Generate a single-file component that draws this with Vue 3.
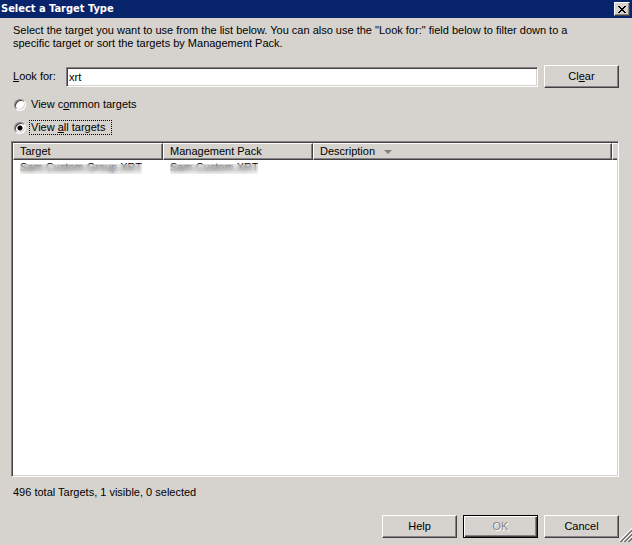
<template>
  <form class="dialog" @submit.prevent>
    <header class="title-bar">
      <h1>Select a Target Type</h1>
      <button type="button" class="close" aria-label="Close">
        <svg width="8" height="7" viewBox="0 0 8 7" shape-rendering="crispEdges">
          <path
            d="M0 0h2v1h1v1h2v-1h1v-1h2v1h-1v1h-1v1h-1v1h1v1h1v1h1v1h-2v-1h-1v-1h-2v1h-1v1h-2v-1h1v-1h1v-1h1v-1h-1v-1h-1v-1h-1z"
          />
        </svg>
      </button>
    </header>

    <main class="content">
      <p class="intro">
        Select the target you want to use from the list below. You can also use the "Look for:" field
        below to filter down to a specific target or sort the targets by Management Pack.
      </p>

      <!-- search -->
      <div class="search">
        <label for="look-for"><u>L</u>ook for:</label>
        <input id="look-for" v-model="query" type="text" />
        <button type="button" class="btn" @click="query = ''"><span>Cl<u>e</u>ar</span></button>
      </div>

      <!-- view mode -->
      <div class="modes">
        <label class="mode">
          <input v-model="mode" type="radio" name="mode" value="common" />
          <span class="caption" :class="{ focused: mode === 'common' }">View c<u>o</u>mmon targets</span>
        </label>
        <label class="mode">
          <input v-model="mode" type="radio" name="mode" value="all" />
          <span class="caption" :class="{ focused: mode === 'all' }">View <u>a</u>ll targets</span>
        </label>
      </div>

      <div class="list">
        <table>
          <colgroup>
            <col class="col-name" />
            <col class="col-name" />
            <col />
            <col class="col-rest" />
          </colgroup>
          <thead>
            <tr>
              <th v-for="col in columns" :key="col.label" scope="col">
                {{ col.label }}
                <svg v-if="col.sorted" class="sort" width="8" height="4" viewBox="0 0 8 4">
                  <path d="M0 0h8l-4 4z" fill="#808080" />
                </svg>
              </th>
              <td class="filler"></td>
            </tr>
          </thead>
          <tbody>
            <tr v-for="row in rows" :key="row.target">
              <td><span class="masked">{{ row.target }}</span></td>
              <td><span class="masked">{{ row.pack }}</span></td>
              <td></td>
              <td></td>
            </tr>
          </tbody>
        </table>
      </div>

      <p class="status">496 total Targets, {{ rows.length }} visible, 0 selected</p>
    </main>

    <footer class="actions">
      <button type="button" class="btn">Help</button>
      <button type="submit" class="btn default" disabled>OK</button>
      <button type="button" class="btn">Cancel</button>
    </footer>

    <svg class="grip" width="13" height="14" viewBox="0 0 13 14">
      <path d="M0 13L13 0M4 13L13 4M8 13L13 8" stroke="#fff" />
      <path d="M1 14L14 1M2 14L14 2M5 14L14 5M6 14L14 6M9 14L14 9M10 14L14 10" stroke="#77757a" />
    </svg>
  </form>
</template>

<script setup>
import { ref } from 'vue'

const query = ref('xrt')
const mode = ref('all')

const columns = [
  { label: 'Target' },
  { label: 'Management Pack' },
  { label: 'Description', sorted: true }
]

const rows = [{ target: 'Sam.Custom.Group.XRT', pack: 'Sam.Custom.XRT' }]
</script>

<style>
body {
  margin: 0;
}
</style>

<style scoped>
.dialog {
  position: relative;
  display: flex;
  flex-direction: column;
  box-sizing: border-box;
  min-height: 100vh;
  padding-bottom: 7px;
  background: #d6d3ce;
  color: #000;
  font: 11px/13px "Liberation Sans", Arial, sans-serif;
}

.dialog * {
  box-sizing: border-box;
}

.title-bar {
  display: flex;
  align-items: center;
  justify-content: space-between;
  height: 18px;
  padding: 0 2px 0 1px;
  background: #08246b;
}

.title-bar h1 {
  margin: 0;
  color: #fff;
  font: bold 11px/16px "DejaVu Sans Condensed", Tahoma, sans-serif;
}

button {
  margin: 0;
  padding: 0;
  border: 1px solid;
  border-color: #fff #424142 #424142 #fff;
  background: #d6d3ce;
  box-shadow: inset -1px -1px #848284;
  color: #000;
  font: inherit;
}

.close {
  display: flex;
  align-items: center;
  justify-content: center;
  width: 16px;
  height: 14px;
}

.content {
  display: flex;
  flex: 1;
  flex-direction: column;
  padding: 6px 13px 0 11px;
}

.intro {
  margin: 0;
  padding: 0 32px 0 2px;
}

.search {
  display: flex;
  align-items: center;
  margin-top: 15px;
}

.search label {
  width: 55px;
  padding-left: 2px;
}

.search input {
  flex: 1;
  min-width: 0;
  height: 20px;
  margin-right: 6px;
  padding: 0 2px;
  border: 1px solid;
  border-color: #848284 #fff #fff #848284;
  outline: 0;
  background: #fff;
  box-shadow: inset 1px 1px #424142, inset -1px -1px #d6d3ce;
  font: inherit;
}

.btn {
  width: 75px;
  height: 23px;
}

.btn.default {
  border-color: #000;
  box-shadow: inset 1px 1px #fff, inset -1px -1px #424142, inset -2px -2px #848284;
}

.btn:disabled {
  color: #848284;
  text-shadow: 1px 1px #fff;
}

.modes {
  display: flex;
  flex-direction: column;
  gap: 8px;
  align-items: flex-start;
  margin: 9px 0 6px 3px;
}

.mode {
  display: flex;
  align-items: center;
}

.mode input {
  appearance: none;
  width: 12px;
  height: 12px;
  margin: 0 3px 0 0;
  border: 1px solid;
  border-color: #848284 #fff #fff #848284;
  border-radius: 50%;
  background: #fff;
  box-shadow: inset 1px 1px #424142, inset -1px -1px #d6d3ce;
}

.mode input:checked {
  background: radial-gradient(circle, #000 2px, #fff 3px);
}

.caption {
  padding: 0 6px 0 1px;
  border: 1px dotted transparent;
}

.caption.focused {
  border-color: #000;
}

.list {
  flex: 1;
  padding: 1px;
  border: 1px solid;
  border-color: #848284 #fff #fff #848284;
  background: #fff;
  box-shadow: inset 1px 1px #424142, inset -1px -1px #d6d3ce;
}

table {
  width: 100%;
  table-layout: fixed;
  border-collapse: separate;
  border-spacing: 0;
}

.col-name {
  width: 150px;
}

.col-rest {
  width: 5px;
}

thead th,
.filler {
  height: 17px;
  padding: 0 6px;
  border: 1px solid;
  border-color: #fff #424142 #424142 #fff;
  background: #d6d3ce;
  box-shadow: inset -1px -1px #848284;
  font-weight: normal;
  text-align: left;
}

.filler {
  padding: 0;
  border-right: 0;
  box-shadow: inset 0 -1px #848284;
}

.sort {
  margin: 0 0 1px 6px;
}

tbody td {
  height: 14px;
  padding: 0 7px;
}

.masked {
  position: relative;
  display: block;
  width: fit-content;
  height: 14px;
  overflow: hidden;
  line-height: 14px;
  white-space: nowrap;
}

/* frosted strip over the lower part of private names */
.masked::after {
  content: "";
  position: absolute;
  inset: 4px 0 0;
  background: rgba(200, 200, 200, 0.2);
  backdrop-filter: blur(2px);
}

.status {
  margin: 9px 2px 16px;
}

.actions {
  display: flex;
  justify-content: flex-end;
  gap: 6px;
  padding-right: 13px;
}

.grip {
  position: absolute;
  right: 0;
  bottom: 3px;
}
</style>
